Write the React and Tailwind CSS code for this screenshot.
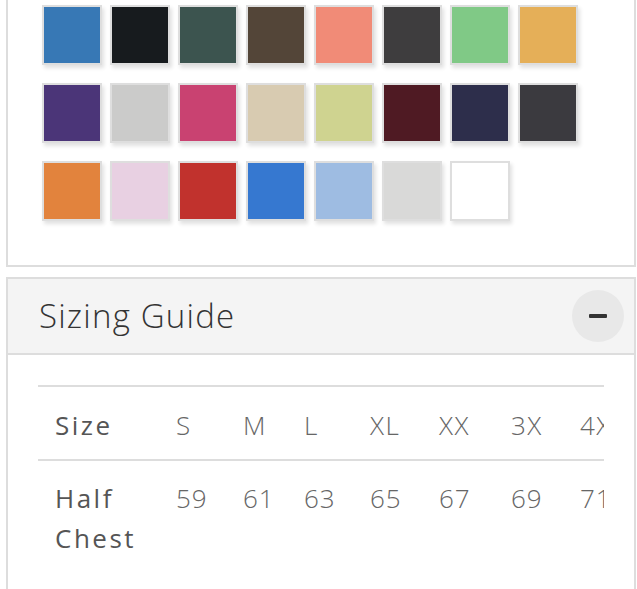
const swatches = [
  "#3778b5", "#171b1e", "#3c544f", "#534538", "#f18b77", "#3e3d3e", "#80c986", "#e5af58",
  "#4b3578", "#cbcbca", "#c94271", "#d8cbb1", "#cfd390", "#4f1a23", "#2d2e4b", "#3b3a3f",
  "#e2833d", "#e8d0e2", "#c1322d", "#3678d0", "#9ebce2", "#d9d9d8", "#ffffff",
];

const sizes = ["S", "M", "L", "XL", "XX", "3X", "4X"];
const chest = ["59", "61", "63", "65", "67", "69", "71"];

export default function App() {
  return (
    <div className="w-[637px] h-[589px] overflow-hidden bg-white font-['Open_Sans',sans-serif]">
      {/* Colour swatches */}
      <div className="ml-[6px] w-[630px] border-2 border-t-0 border-[#dddddd] pl-[34px] pt-[5px] pb-[44px]">
        <div className="grid grid-cols-[repeat(8,60px)] gap-x-[8px] gap-y-[18px]">
          {swatches.map((c, i) => (
            <div
              key={i}
              className="w-[60px] h-[60px] border-2 border-[#dedede] shadow-[2px_3px_4px_rgba(0,0,0,0.12)]"
              style={{ backgroundColor: c }}
            />
          ))}
        </div>
      </div>

      {/* Sizing guide */}
      <div className="ml-[6px] mt-[10px] w-[630px] border-2 border-b-0 border-[#dddddd]">
        <div className="h-[76px] bg-[#f4f4f4] border-b-2 border-[#dddddd] flex items-center justify-between pl-[31px] pr-[10px]">
          <span className="text-[33px] font-light text-[#333333] tracking-[1.2px]">Sizing Guide</span>
          <div className="w-[52px] h-[52px] rounded-full bg-[#e8e8e8] flex items-center justify-center">
            <div className="w-[18px] h-[4px] rounded-[1px] bg-[#333333]" />
          </div>
        </div>

        <div className="px-[30px] pt-[30px] h-[260px]">
          <div className="w-[566px] overflow-hidden">
            <div className="border-t-2 border-[#dddddd] w-[566px]" />
            <div className="grid grid-cols-[138px_67px_61px_66px_69px_72px_69px_60px] text-[26px] leading-[40px] text-[#555555] whitespace-nowrap">
              <div className="pl-[17px] pt-[18px] pb-[14px] tracking-[2.5px]">Size</div>
              {sizes.map((s) => (
                <div key={s} className="pt-[18px] pb-[14px] font-light tracking-[1.5px] text-[#666666]">{s}</div>
              ))}
            </div>
            <div className="border-t-2 border-[#dddddd] w-[566px]" />
            <div className="grid grid-cols-[138px_67px_61px_66px_69px_72px_69px_60px] text-[26px] leading-[40px] text-[#555555]">
              <div className="pl-[17px] pt-[17px] pr-[20px] tracking-[2.5px]">Half Chest</div>
              {chest.map((v) => (
                <div key={v} className="pt-[17px] font-light tracking-[1px] text-[#666666]">{v}</div>
              ))}
            </div>
          </div>
        </div>
      </div>
    </div>
  );
}
